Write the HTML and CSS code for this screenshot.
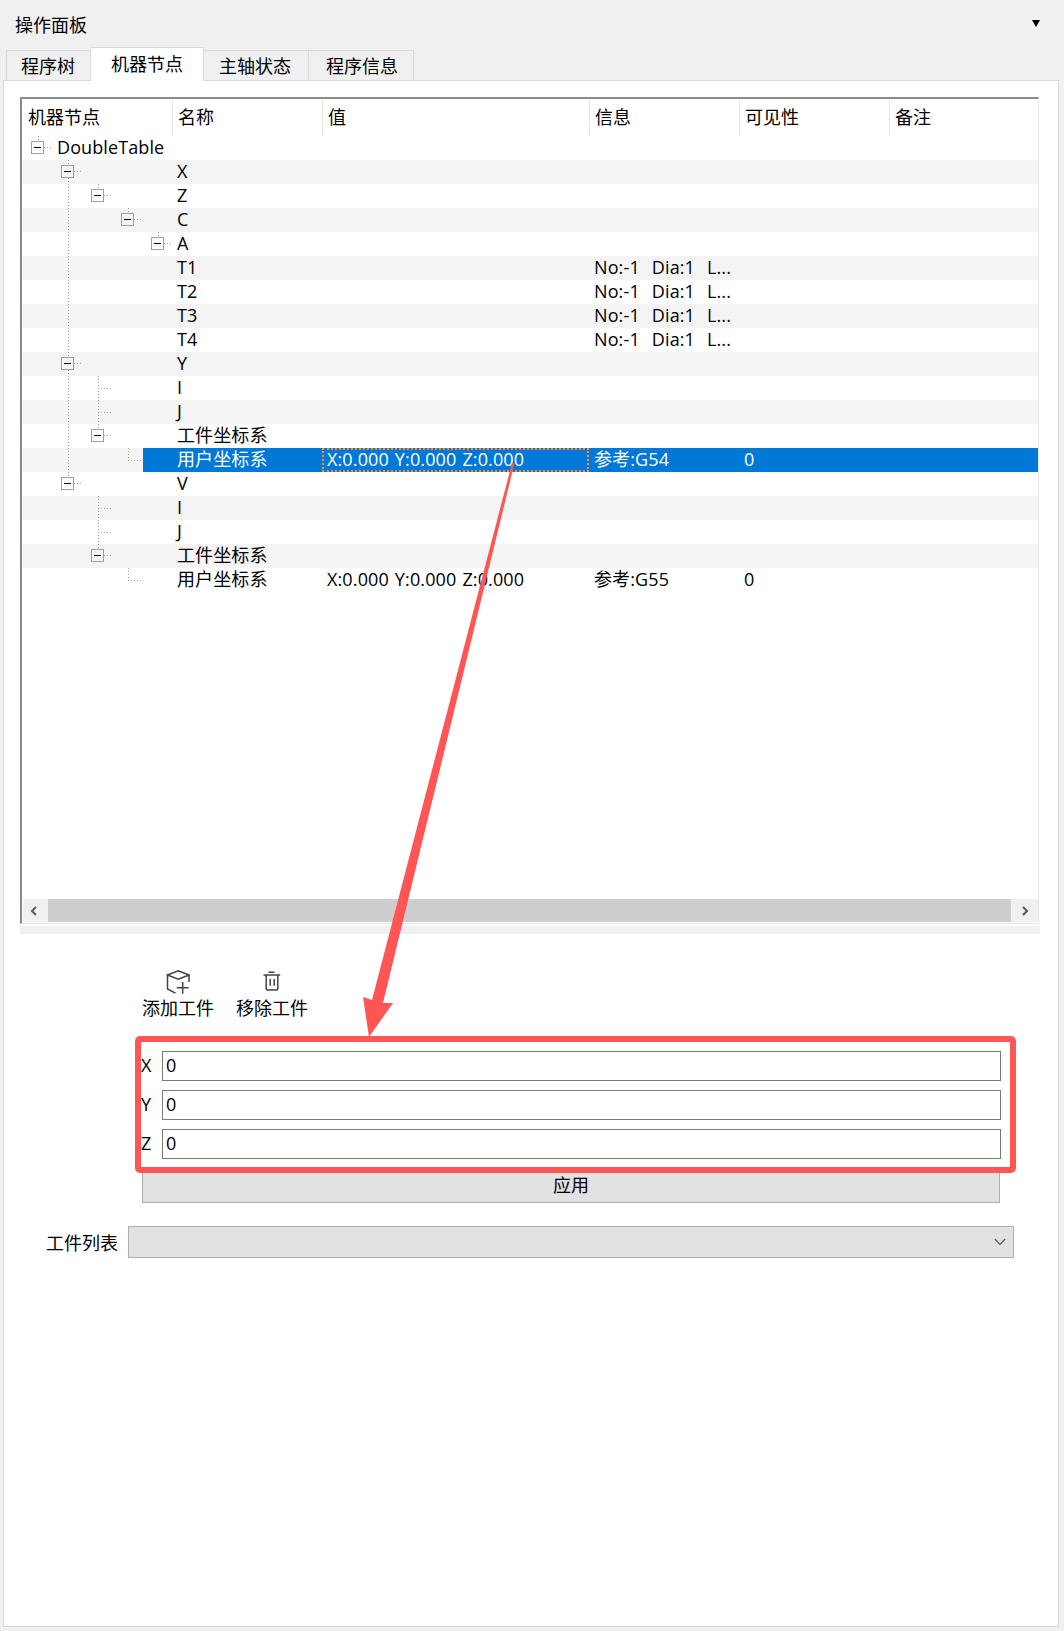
FILE: index.html
```html
<!DOCTYPE html>
<html lang="zh">
<head>
<meta charset="utf-8">
<title>操作面板</title>
<link rel="stylesheet" href="styles.css">
</head>
<body>
<div class="topbar"><span class="title">操作面板</span><span class="menu-arrow"></span></div>
<div class="tabs">
  <div class="tab t1">程序树</div>
  <div class="tab active">机器节点</div>
  <div class="tab t3">主轴状态</div>
  <div class="tab t4">程序信息</div>
</div>
<div class="panel">
  <div class="frame">
    <div class="cols header">
      <div class="hcell">机器节点</div><div class="hcell">名称</div><div class="hcell">值</div><div class="hcell">信息</div><div class="hcell">可见性</div><div class="hcell">备注</div>
    </div>
    <div class="rows">
      <div class="cols row"><div class="tree root"><span class="box"></span><span class="rootname">DoubleTable</span></div></div>
      <div class="cols row alt"><div class="tree lv1"><span class="box"></span></div><div class="cell">X</div></div>
      <div class="cols row"><div class="tree lv2"><span class="box"></span></div><div class="cell">Z</div></div>
      <div class="cols row alt"><div class="tree lv3"><span class="box"></span></div><div class="cell">C</div></div>
      <div class="cols row"><div class="tree lv4"><span class="box"></span></div><div class="cell">A</div></div>
      <div class="cols row alt"><div class="tree"></div><div class="cell">T1</div><div class="cell"></div><div class="cell">No:-1  Dia:1  L...</div></div>
      <div class="cols row"><div class="tree"></div><div class="cell">T2</div><div class="cell"></div><div class="cell">No:-1  Dia:1  L...</div></div>
      <div class="cols row alt"><div class="tree"></div><div class="cell">T3</div><div class="cell"></div><div class="cell">No:-1  Dia:1  L...</div></div>
      <div class="cols row"><div class="tree"></div><div class="cell">T4</div><div class="cell"></div><div class="cell">No:-1  Dia:1  L...</div></div>
      <div class="cols row alt"><div class="tree lv1"><span class="box"></span></div><div class="cell">Y</div></div>
      <div class="cols row"><div class="tree"></div><div class="cell">I</div></div>
      <div class="cols row alt"><div class="tree"></div><div class="cell">J</div></div>
      <div class="cols row"><div class="tree lv2"><span class="box"></span></div><div class="cell">工件坐标系</div></div>
      <div class="cols row selected"><div class="tree"></div><div class="cell">用户坐标系</div><div class="cell focus">X:0.000 Y:0.000 Z:0.000</div><div class="cell">参考:G54</div><div class="cell">0</div></div>
      <div class="cols row"><div class="tree lv1"><span class="box"></span></div><div class="cell">V</div></div>
      <div class="cols row alt"><div class="tree"></div><div class="cell">I</div></div>
      <div class="cols row"><div class="tree"></div><div class="cell">J</div></div>
      <div class="cols row alt"><div class="tree lv2"><span class="box"></span></div><div class="cell">工件坐标系</div></div>
      <div class="cols row"><div class="tree"></div><div class="cell">用户坐标系</div><div class="cell">X:0.000 Y:0.000 Z:0.000</div><div class="cell">参考:G55</div><div class="cell">0</div></div>
      <svg class="tree-lines" viewBox="23 136 160 456" width="160" height="456">
        <path class="dots" d="M38.5 136V141M44 147.5H53
          M68.5 160V165M68.5 178V357M68.5 370V477M74 171.5H83M74 363.5H83M74 483.5H83
          M98.5 184V189M104 195.5H113M128.5 208V213M134 219.5H143M158.5 232V237M164 243.5H173
          M98.5 376V429M98 388.5H113M98 412.5H113M104 435.5H113
          M128.5 448V460M128 460.5H143
          M98.5 496V549M98 508.5H113M98 532.5H113M104 555.5H113
          M128.5 568V580M128 580.5H143"/>
      </svg>
    </div>
    <div class="hscroll">
      <div class="sbtn sleft"><svg width="8" height="10" viewBox="0 0 8 10"><path class="chev" d="M6 1L2 5L6 9"/></svg></div>
      <div class="sthumb"></div>
      <div class="sbtn sright"><svg width="8" height="10" viewBox="0 0 8 10"><path class="chev" d="M2 1L6 5L2 9"/></svg></div>
    </div>
  </div>
  <div class="splitter"></div>
  <div class="toolbar">
    <div class="tool">
      <svg class="ico" width="24" height="24" viewBox="0 0 24 24"><path class="stroke" d="M1.5 5L12.3 .8L23 5L12.3 9.3ZM1.5 5V19L9.5 23.2M23 5V12M16.7 12V23.7M10.7 17.7H22.7"/></svg>
      <span>添加工件</span>
    </div>
    <div class="tool">
      <svg class="ico" width="24" height="24" viewBox="0 0 24 24"><path class="stroke" d="M3.5 5H20.2M8.5 2.3H14.5M6.2 5V18.2Q6.2 20 8 20H16Q17.8 20 17.8 18.2V5M10.2 9V15.7M14.2 9V15.7"/></svg>
      <span>移除工件</span>
    </div>
  </div>
  <div class="form">
    <div class="frow"><label class="flabel">X</label><input class="finput" value="0"></div>
    <div class="frow"><label class="flabel">Y</label><input class="finput" value="0"></div>
    <div class="frow"><label class="flabel">Z</label><input class="finput" value="0"></div>
  </div>
  <div class="apply">应用</div>
  <div class="combo-row">
    <span class="combo-label">工件列表</span>
    <div class="combo"><svg width="12" height="8" viewBox="0 0 12 8"><path class="combo-chev" d="M.8 1L6 6.4L11.2 1"/></svg></div>
  </div>
</div>
<svg class="annotation" width="1064" height="1631" viewBox="0 0 1064 1631">
  <rect class="red-box" x="138" y="1039" width="875" height="131" rx="2"/>
  <polygon class="red-arrow" points="512,463 514.5,463 383,1003 393,1003 369,1037 363,997 372,1000"/>
</svg>
</body>
</html>
```
FILE: styles.css
```css
* { box-sizing: border-box; }
html, body { margin: 0; padding: 0; }
body {
  position: relative;
  width: 1064px;
  height: 1631px;
  overflow: hidden;
  background: #f0f0f0;
  color: #000;
  font-family: "Open Sans", "Noto Sans CJK SC", sans-serif;
  font-size: 18px;
}
.topbar {
  height: 47px;
  padding: 1px 24px 0 15px;
  display: flex;
  align-items: center;
  justify-content: space-between;
}
.menu-arrow {
  width: 0;
  height: 0;
  margin-bottom: 1px;
  border-left: 4px solid transparent;
  border-right: 4px solid transparent;
  border-top: 7px solid #000;
}
.tabs {
  display: flex;
  align-items: flex-end;
  height: 33px;
  margin-left: 6px;
}
.tab {
  height: 30px;
  padding: 0 16px;
  background: #f0f0f0;
  border: 1px solid #d9d9d9;
  border-bottom: none;
  border-left: none;
  line-height: 31px;
  white-space: nowrap;
}
.tab.t1 { border-left: 1px solid #d9d9d9; padding: 0 15px 0 14px; }
.tab.t3 { padding: 0 17px 0 15px; }
.tab.t4 { padding: 0 15px 0 17px; }
.tab.active {
  position: relative;
  z-index: 1;
  height: 34px;
  margin-bottom: -1px;
  padding: 0 20px;
  background: #fff;
  line-height: 32px;
  border-left: none;
}
.panel {
  width: 1056px;
  height: 1547px;
  margin-left: 3px;
  padding: 16px 19px 0 16px;
  background: #fff;
  border: 1px solid #d9d9d9;
}
.frame {
  height: 827px;
  display: flex;
  flex-direction: column;
  border-top: 2px solid #8a8a8a;
  border-left: 2px solid #8a8a8a;
  border-right: 1px solid #e6e6e6;
  border-bottom: 1px solid #e6e6e6;
}
.cols {
  display: grid;
  grid-template-columns: 149px 150px 267px 150px 150px 149px;
}
.header { height: 37px; margin-left: 2px; flex: none; }
.hcell {
  margin-top: 1px;
  padding-left: 5px;
  border-right: 1px solid #e5e5e5;
  line-height: 35px;
}
.hcell:first-child { padding-left: 4px; }
.rows { position: relative; flex: 1; margin-left: 1px; }
.row { height: 24px; line-height: 22px; white-space: pre; }
.row.alt { background: #f4f4f4; }
.row.selected {
  background: linear-gradient(to right, #f4f4f4 120px, #0078d7 120px);
  color: #fff;
}
.cell {
  height: 24px;
  padding-left: 5px;
  overflow: hidden;
  letter-spacing: .12px;
  word-spacing: 1.2px;
}
.focus { outline: 2px dotted #ff8c28; outline-offset: -2px; }
.tree { display: flex; min-width: 0; }
.root { padding-left: 8px; }
.lv1 { padding-left: 38px; }
.lv2 { padding-left: 68px; }
.lv3 { padding-left: 98px; }
.lv4 { padding-left: 128px; }
.box {
  flex: none;
  width: 13px;
  height: 13px;
  margin-top: 5px;
  display: flex;
  align-items: center;
  justify-content: center;
  border: 1px solid #a0a0a0;
}
.box::after { content: ""; width: 7px; height: 1px; background: #000; }
.rootname { margin-left: 13px; white-space: nowrap; letter-spacing: .1px; }
.tree-lines { position: absolute; left: 0; top: 0; pointer-events: none; }
.dots { fill: none; stroke: #a0a0a0; stroke-width: 1; stroke-dasharray: 1 2; }
.hscroll { flex: none; display: flex; height: 23px; margin: 0 0 1px 1px; }
.sbtn {
  flex: none;
  width: 25px;
  display: flex;
  align-items: center;
  justify-content: center;
  background: #f0f0f0;
}
.sleft { padding-right: 3px; }
.sright { width: 27px; }
.sthumb { flex: 1; background: #cdcdcd; }
.chev { fill: none; stroke: #606060; stroke-width: 2.2; }
.splitter { height: 8px; margin: 2px -1px 0 0; background: #f0f0f0; }
.toolbar { display: flex; gap: 22px; margin: 36px 0 0 122px; }
.tool { display: flex; flex-direction: column; align-items: center; }
.ico { display: block; margin-bottom: 2px; }
.stroke { fill: none; stroke: #444; stroke-width: 1.5; }
.tool span { line-height: 24px; white-space: nowrap; }
.form {
  display: flex;
  flex-direction: column;
  gap: 9px;
  margin: 31px 0 0 121px;
}
.frow { display: flex; align-items: center; height: 30px; }
.flabel { width: 21px; flex: none; padding-bottom: 2px; }
.finput {
  width: 839px;
  height: 30px;
  padding: 0 3px 2px;
  border: 1px solid #7a7a7a;
  border-radius: 0;
  background: #fff;
  font: inherit;
  color: #000;
  outline: none;
}
.apply {
  width: 858px;
  height: 33px;
  margin: 11px 0 0 122px;
  background: #e1e1e1;
  border: 1px solid #adadad;
  text-align: center;
  line-height: 29px;
}
.combo-row { display: flex; align-items: center; gap: 9px; margin: 23px 0 0 26px; }
.combo-label { width: 73px; white-space: nowrap; }
.combo {
  width: 886px;
  height: 32px;
  padding-right: 7px;
  display: flex;
  align-items: center;
  justify-content: flex-end;
  background: #e1e1e1;
  border: 1px solid #adadad;
}
.combo-chev { fill: none; stroke: #555; stroke-width: 1.2; }
.annotation { position: absolute; left: 0; top: 0; pointer-events: none; }
.red-box { fill: none; stroke: #ff5555; stroke-width: 6; }
.red-arrow { fill: #ff5555; }
```
